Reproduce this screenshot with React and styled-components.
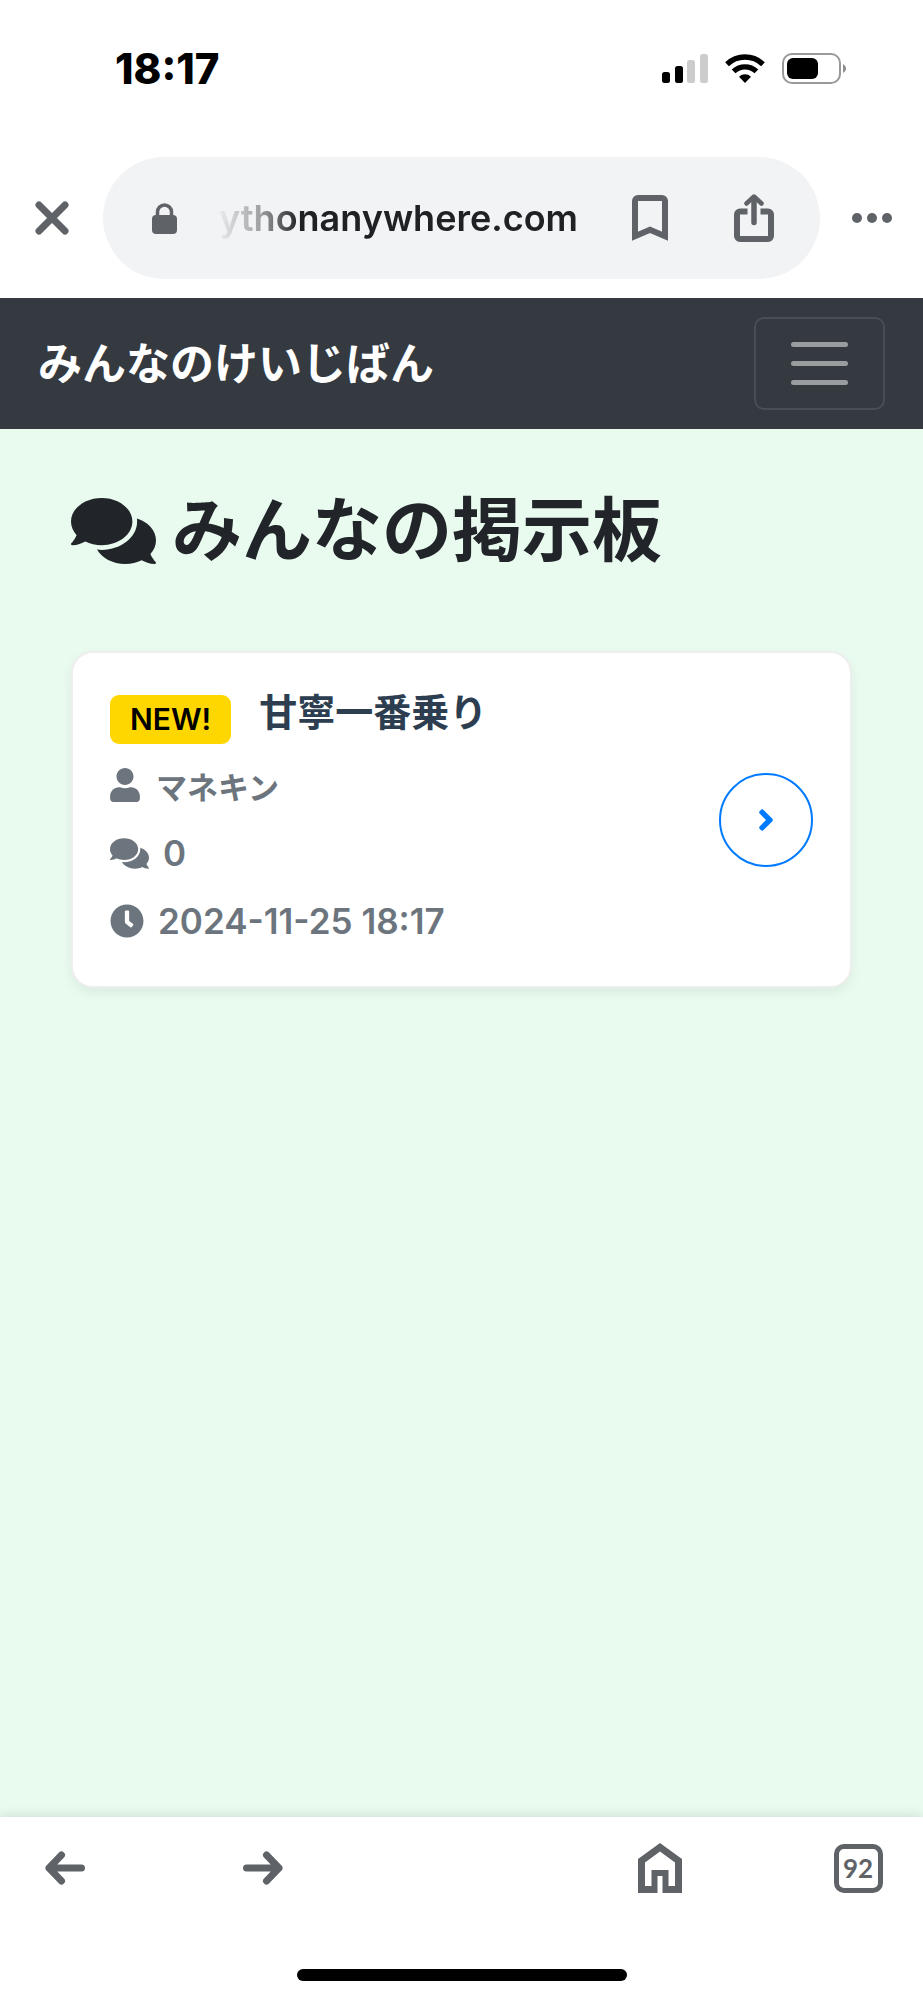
import React from "react";
import styled, { createGlobalStyle } from "styled-components";
import { FaComments, FaUser, FaClock, FaAngleRight } from "react-icons/fa";

const GlobalStyle = createGlobalStyle`
  *, *::before, *::after { box-sizing: border-box; }
  body {
    margin: 0;
    background: #fff;
    color: #212529;
    font-family: Inter, "Noto Sans CJK JP", sans-serif;
  }
  svg { display: block; flex: none; }
  button { margin: 0; font: inherit; cursor: pointer; }
  h1, h2, p, ul { margin: 0; padding: 0; }
`;

const Screen = styled.div`
  display: flex;
  flex-direction: column;
  min-height: 100vh;
`;

const StatusBar = styled.header`
  display: flex;
  align-items: center;
  justify-content: space-between;
  height: 137px;
  padding: 0 76px 0 115px;
  color: #000;
`;

const Clock = styled.time`
  font-size: 42px;
  font-weight: 800;
  line-height: 48px;
`;

const StatusIcons = styled.div`
  display: flex;
  align-items: center;
  gap: 17px;
`;

const BrowserBar = styled.div`
  display: grid;
  grid-template-columns: 103px minmax(0, 1fr) 103px;
  align-items: center;
  padding: 20px 0 19px;
`;

const IconButton = styled.button`
  display: flex;
  align-items: center;
  justify-content: center;
  justify-self: center;
  padding: 0;
  border: 0;
  background: none;
  color: #5f6368;
`;

const AddressPill = styled.div`
  display: flex;
  align-items: center;
  height: 122px;
  padding: 0 46px 0 49px;
  border-radius: 61px;
  background: #f1f3f5;
  color: #5f6368;
`;

const AddressInput = styled.input`
  flex: 1;
  min-width: 0;
  height: 60px;
  margin: 0 54px 0 38px;
  padding: 0;
  border: 0;
  outline: 0;
  background: none;
  color: #202124;
  font-family: Inter, sans-serif;
  font-size: 36px;
  font-weight: 600;
  text-align: right;
  mask-image: linear-gradient(to right, transparent 0, rgba(0, 0, 0, 0.4) 46px, #000 84px);
`;

const PillActions = styled.div`
  display: flex;
  align-items: center;
  gap: 66px;
`;

const Navbar = styled.nav`
  display: flex;
  align-items: center;
  justify-content: space-between;
  padding: 19px 38px;
  background: #343a40;
`;

const Brand = styled.a`
  color: #fff;
  font-size: 44px;
  font-weight: 600;
  line-height: 64px;
  text-decoration: none;
`;

const Toggler = styled.button`
  display: flex;
  align-items: center;
  justify-content: center;
  width: 131px;
  height: 93px;
  padding: 0;
  border: 2px solid rgba(255, 255, 255, 0.1);
  border-radius: 10px;
  background: none;
  color: #9a9d9f;
`;

const Page = styled.main`
  flex: 1;
  padding: 58px 71px;
  background: #e9faef;
`;

const Title = styled.h1`
  display: flex;
  align-items: center;
  gap: 16px;
  margin-bottom: 76px;
  font-size: 70px;
  font-weight: 700;
  line-height: 88px;
`;

const TitleIcon = styled(FaComments)`
  width: 85px;
  height: 76px;
`;

const ThreadCard = styled.article`
  display: flex;
  align-items: center;
  justify-content: space-between;
  padding: 31px 37px;
  border: 2px solid #eee;
  border-radius: 22px;
  background: #fff;
  box-shadow: 0 5px 12px rgba(0, 0, 0, 0.06);
`;

const ThreadHead = styled.div`
  display: flex;
  align-items: flex-end;
  gap: 28px;
  padding-bottom: 7px;
`;

const Badge = styled.span`
  padding: 0 20px;
  border-radius: 9px;
  background: #ffd700;
  color: #000;
  font-size: 30px;
  font-weight: 600;
  line-height: 49px;
`;

const ThreadTitle = styled.h2`
  padding-bottom: 4px;
  color: #2c3e50;
  font-size: 38px;
  font-weight: 600;
  line-height: 56px;
`;

const MetaList = styled.ul`
  list-style: none;
`;

const MetaItem = styled.li`
  display: flex;
  align-items: center;
  gap: ${(p) => p.$gap}px;
  height: 68px;
  color: #6c757d;
  font-size: ${(p) => p.$size}px;
  font-weight: 600;
`;

const UserIcon = styled(FaUser)`
  width: 30px;
  height: 34px;
`;

const OpenLink = styled.a`
  display: flex;
  flex: none;
  align-items: center;
  justify-content: center;
  width: 94px;
  height: 94px;
  border: 2px solid #007bff;
  border-radius: 50%;
  color: #007bff;
`;

const Toolbar = styled.footer`
  position: relative;
  padding-bottom: 19px;
  background: #fff;
  box-shadow: 0 0 12px rgba(0, 0, 0, 0.14);
`;

const ToolbarRow = styled.div`
  display: grid;
  grid-template-columns: repeat(5, 64px);
  justify-content: space-between;
  align-items: center;
  height: 152px;
  padding: 0 33px 50px;
`;

const HomeButton = styled(IconButton)`
  grid-column: 4;
`;

const TabsButton = styled(IconButton)`
  width: 49px;
  height: 49px;
  border: 5px solid #5f6368;
  border-radius: 10px;
  font-family: Lato, sans-serif;
  font-size: 26px;
  font-weight: 700;
  line-height: 38px;
`;

const HomeIndicator = styled.div`
  width: 330px;
  height: 12px;
  margin: 0 auto;
  border-radius: 6px;
  background: #000;
`;

const SignalIcon = () => (
  <svg width="46" height="29" viewBox="0 0 46 29" fill="#000">
    <rect x="0" y="18" width="8" height="11" rx="2.5" />
    <rect x="13" y="12" width="8" height="17" rx="2.5" />
    <rect x="25" y="6" width="8" height="23" rx="2.5" fill="#ccc" />
    <rect x="38" y="0" width="8" height="29" rx="2.5" fill="#ccc" />
  </svg>
);

const WifiIcon = () => (
  <svg width="40" height="29" viewBox="0 0 40 29">
    <g fill="none" stroke="#000" strokeWidth="5.4">
      <path d="M2 10.3a26 26 0 0 1 36 0" />
      <path d="M8.6 17.4a16.6 16.6 0 0 1 22.8 0" />
    </g>
    <path d="M20 29l-6-6.200c3.400-3.300 8.600-3.300 12 0z" fill="#000" />
  </svg>
);

const BatteryIcon = () => (
  <svg width="65" height="31" viewBox="0 0 65 31">
    <rect x="1" y="1" width="57" height="29" rx="9" fill="none" stroke="#999" strokeWidth="2" />
    <rect x="5" y="5" width="31" height="21" rx="6" fill="#000" />
    <path d="M61 11c4 2 4 7 0 9z" fill="#8e8e8e" />
  </svg>
);

const CloseIcon = () => (
  <svg width="34" height="34" viewBox="0 0 34 34" stroke="currentColor" strokeWidth="7" strokeLinecap="round">
    <path d="M4 4l26 26M30 4L4 30" />
  </svg>
);

const LockIcon = () => (
  <svg width="25" height="31" viewBox="0 0 25 31">
    <rect y="12" width="25" height="19" rx="4" fill="currentColor" />
    <path d="M5.500 15V9a7 7 0 0 1 14 0v6" fill="none" stroke="currentColor" strokeWidth="3.500" />
  </svg>
);

const BookmarkIcon = () => (
  <svg width="36" height="46" viewBox="0 0 36 46">
    <path d="M3 41.200V6a3 3 0 0 1 3-3h24a3 3 0 0 1 3 3v35.200L18 34.800z" fill="none" stroke="currentColor" strokeWidth="6" />
  </svg>
);

const ShareIcon = () => (
  <svg width="40" height="48" viewBox="0 0 40 48" fill="none" stroke="currentColor">
    <path d="M13.500 17.500H6a3 3 0 0 0-3 3V42a3 3 0 0 0 3 3h28a3 3 0 0 0 3-3V20.500a3 3 0 0 0-3-3h-7.500" strokeWidth="6" />
    <path d="M20 28.500V4" strokeWidth="5.500" strokeLinecap="round" />
    <path d="M12.500 9.500L20 2.500l7.500 7" strokeWidth="4.500" strokeLinecap="round" strokeLinejoin="round" />
  </svg>
);

const DotsIcon = () => (
  <svg width="40" height="10" viewBox="0 0 40 10" fill="currentColor">
    <circle cx="5" cy="5" r="5" />
    <circle cx="20" cy="5" r="5" />
    <circle cx="35" cy="5" r="5" />
  </svg>
);

const MenuIcon = () => (
  <svg width="57" height="43" viewBox="0 0 57 43" fill="currentColor">
    <rect y="0" width="57" height="5" rx="2.500" />
    <rect y="19" width="57" height="5" rx="2.500" />
    <rect y="38" width="57" height="5" rx="2.500" />
  </svg>
);

const BackIcon = () => (
  <svg width="40" height="34" viewBox="0 0 40 34" fill="none" stroke="currentColor" strokeWidth="7" strokeLinecap="round" strokeLinejoin="round">
    <path d="M36.500 17H4M16.500 4L4 17l12.500 13" />
  </svg>
);

const ForwardIcon = () => (
  <svg width="40" height="34" viewBox="0 0 40 34" fill="none" stroke="currentColor" strokeWidth="7" strokeLinecap="round" strokeLinejoin="round">
    <path d="M3.500 17H36M23.500 4L36 17 23.500 30" />
  </svg>
);

const HomeIcon = () => (
  <svg width="44" height="50" viewBox="0 0 44 50">
    <path
      fill="currentColor"
      fillRule="evenodd"
      d="M22 0l22 16v34H24.500V33h-5v17H0V16zM22 8.500L7 19.500V43h6.500V27h17v16H37V19.500z"
    />
  </svg>
);

const thread = {
  title: "甘寧一番乗り",
  author: "マネキン",
  comments: "0",
  posted: "2024-11-25 18:17",
};

export default function App() {
  return (
    <Screen>
      <GlobalStyle />
      <StatusBar>
        <Clock>18:17</Clock>
        <StatusIcons>
          <SignalIcon />
          <WifiIcon />
          <BatteryIcon />
        </StatusIcons>
      </StatusBar>

      <BrowserBar>
        <IconButton aria-label="閉じる"><CloseIcon /></IconButton>
        <AddressPill>
          <LockIcon />
          <AddressInput aria-label="アドレス" type="text" defaultValue="ythonanywhere.com" />
          <PillActions>
            <IconButton aria-label="ブックマーク"><BookmarkIcon /></IconButton>
            <IconButton aria-label="共有"><ShareIcon /></IconButton>
          </PillActions>
        </AddressPill>
        <IconButton aria-label="その他"><DotsIcon /></IconButton>
      </BrowserBar>

      <Navbar>
        <Brand href="#">みんなのけいじばん</Brand>
        <Toggler aria-label="メニュー"><MenuIcon /></Toggler>
      </Navbar>

      <Page>
        <Title>
          <TitleIcon />
          みんなの掲示板
        </Title>
        <ThreadCard>
          <div>
            <ThreadHead>
              <Badge>NEW!</Badge>
              <ThreadTitle>{thread.title}</ThreadTitle>
            </ThreadHead>
            <MetaList>
              <MetaItem $size={31} $gap={16}><UserIcon />{thread.author}</MetaItem>
              <MetaItem $size={35} $gap={14}><FaComments size={39} />{thread.comments}</MetaItem>
              <MetaItem $size={35} $gap={14}><FaClock size={34} />{thread.posted}</MetaItem>
            </MetaList>
          </div>
          <OpenLink href="#" aria-label="スレッドを開く"><FaAngleRight size={34} /></OpenLink>
        </ThreadCard>
      </Page>

      <Toolbar>
        <ToolbarRow>
          <IconButton aria-label="戻る"><BackIcon /></IconButton>
          <IconButton aria-label="進む"><ForwardIcon /></IconButton>
          <HomeButton aria-label="ホーム"><HomeIcon /></HomeButton>
          <TabsButton aria-label="タブ 92">92</TabsButton>
        </ToolbarRow>
        <HomeIndicator />
      </Toolbar>
    </Screen>
  );
}
